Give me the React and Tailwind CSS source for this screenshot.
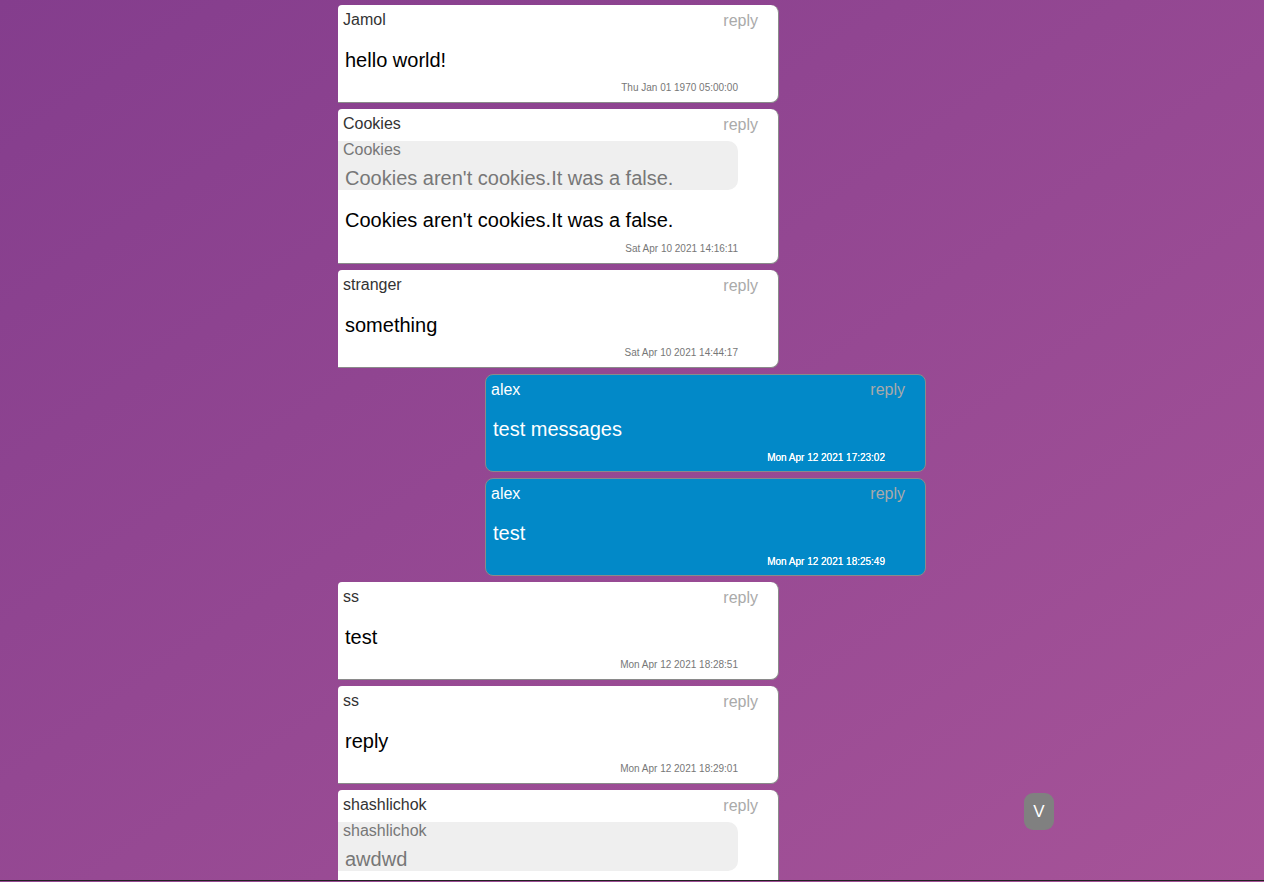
import React from "react";

const messages = [
  { user: "Jamol", text: "hello world!", time: "Thu Jan 01 1970 05:00:00" },
  {
    user: "Cookies",
    text: "Cookies aren't cookies.It was a false.",
    time: "Sat Apr 10 2021 14:16:11",
    quote: { user: "Cookies", text: "Cookies aren't cookies.It was a false." },
  },
  { user: "stranger", text: "something", time: "Sat Apr 10 2021 14:44:17" },
  { user: "alex", text: "test messages", time: "Mon Apr 12 2021 17:23:02", own: true },
  { user: "alex", text: "test", time: "Mon Apr 12 2021 18:25:49", own: true },
  { user: "ss", text: "test", time: "Mon Apr 12 2021 18:28:51" },
  { user: "ss", text: "reply", time: "Mon Apr 12 2021 18:29:01" },
  {
    user: "shashlichok",
    text: "awdwd",
    time: "Mon Apr 12 2021 18:30:00",
    quote: { user: "shashlichok", text: "awdwd" },
  },
];

function Card({ m }) {
  const own = m.own;
  const q = !!m.quote;
  return (
    <div className={own ? "flex justify-end" : "flex justify-start"}>
      <div
        className={
          own
            ? "w-[441px] bg-[#0289c8] border border-[#8a8a8a] rounded-[8px] pt-[5px] pb-[7px] text-white"
            : "w-[441px] bg-white border-r border-b border-[#8a8a8a] rounded-tl-[4px] rounded-tr-[8px] rounded-br-[8px] pt-[5px] pb-[8px] text-black"
        }
      >
        <div className="flex items-center justify-between h-[20px]">
          <span
            className={
              own
                ? "pl-[5px] text-[16px] leading-[20px] text-white"
                : "pl-[5px] text-[16px] leading-[20px] text-[#333]"
            }
          >
            {m.user}
          </span>
          <span
            className={
              own
                ? "pr-[20px] text-[16px] leading-[20px] text-[#aaaaaa]"
                : "pr-[20px] mt-[2px] text-[16px] leading-[20px] text-[#aaaaaa]"
            }
          >
            reply
          </span>
        </div>
        {q && (
          <div className="mt-[7px] w-[400px] h-[49px] bg-[#efefef] rounded-r-[10px]">
            <div className="pl-[5px] text-[16px] leading-[18px] text-[#777]">{m.quote.user}</div>
            <div className="mt-[7px] pl-[7px] text-[20px] leading-[24px] text-[#777]">{m.quote.text}</div>
          </div>
        )}
        <div
          className={
            own
              ? "mt-[17px] pl-[7px] text-[20px] leading-[24px]"
              : "mt-[18px] pl-[7px] text-[20px] leading-[24px]"
          }
        >
          {m.text}
        </div>
        <div
          className={
            own || q
              ? "mt-[11px] flex justify-end pr-[40px]"
              : "mt-[10px] flex justify-end pr-[40px]"
          }
        >
          <span
            className={
              own
                ? "text-[10px] leading-[12px] text-white [text-shadow:0_0_0.4px_#fff]"
                : "text-[10px] leading-[12px] text-[#777]"
            }
          >
            {m.time}
          </span>
        </div>
      </div>
    </div>
  );
}

export default function App() {
  return (
    <div
      className="relative h-[882px] w-full overflow-hidden bg-linear-to-br from-[#843d8d] to-[#a65398]"
      style={{ fontFamily: '"Liberation Sans", Arial, sans-serif' }}
    >
      <div className="h-[881px] border-b border-[#222] overflow-hidden">
        <div className="mx-auto w-[588px] pt-[5px] flex flex-col gap-[6px]">
          {messages.map((m, i) => (
            <Card key={i} m={m} />
          ))}
        </div>
      </div>
      <button className="absolute left-[1024px] top-[793px] w-[30px] h-[37px] rounded-[9px] bg-[#808080] text-white text-[17px] flex items-center justify-center">
        V
      </button>
    </div>
  );
}
